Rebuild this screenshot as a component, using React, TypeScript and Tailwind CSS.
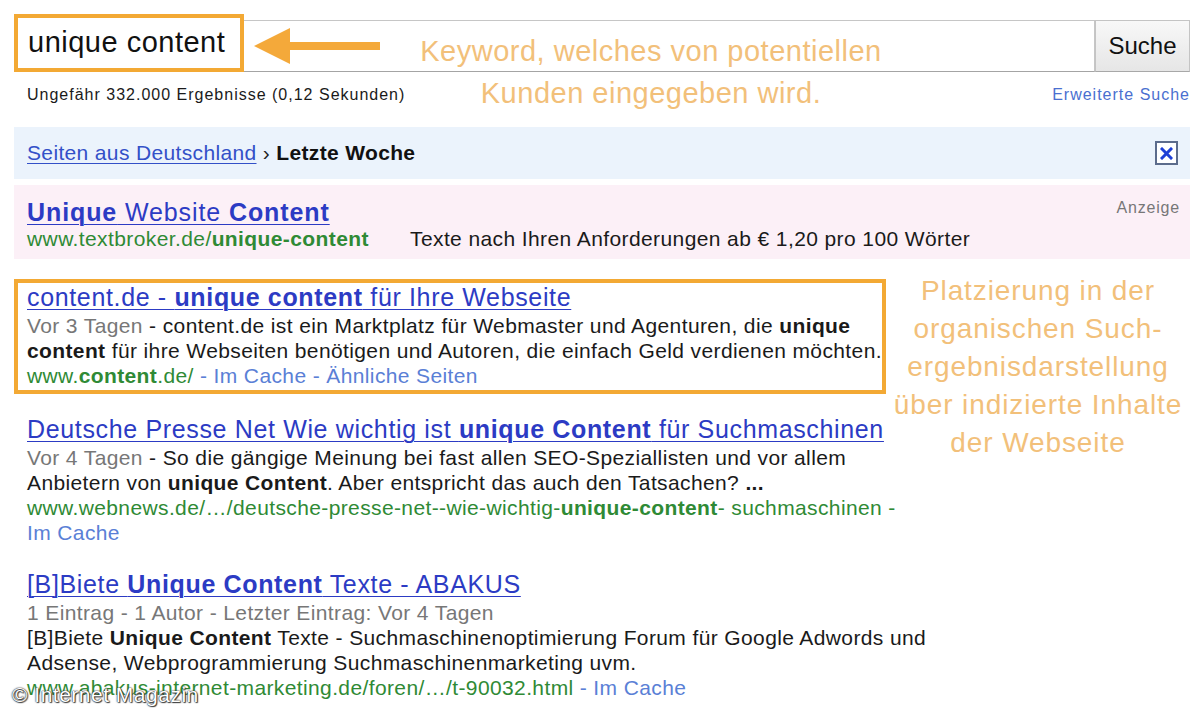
import React from "react";

const blue = "text-[#2c3bc4]";

function Result({
  title,
  lines,
  className = "",
}: {
  title: React.ReactNode;
  lines: React.ReactNode[];
  className?: string;
}) {
  return (
    <div className={className}>
      <a className={`block whitespace-nowrap text-[25px] leading-[26px] tracking-[0.65px] underline decoration-1 underline-offset-[3px] ${blue}`}>{title}</a>
      <div className="mt-[3px] text-[21px] leading-[25px] tracking-[0.38px] text-[#1a1a1a]">
        {lines.map((l, i) => (
          <div key={i} className="whitespace-nowrap">
            {l}
          </div>
        ))}
      </div>
    </div>
  );
}

export default function App() {
  return (
    <div className="relative w-[1200px] h-[720px] overflow-hidden bg-white font-['Liberation_Sans',Arial,sans-serif] pl-[14px] pr-[10px]">
      {/* search row */}
      <div className="relative mt-[20px] flex h-[52px]">
        <div className="flex-1 border border-[#c6c6c6] border-b-[#a4a4a4] bg-white" />
        <button className="w-[95px] border border-[#c4c4c4] border-b-[#a8a8a8] bg-gradient-to-b from-[#f8f8f8] to-[#e6e6e6] text-[24px] text-[#111]">
          Suche
        </button>

        <div className="absolute left-0 top-[-6px] flex h-[58px] w-[230px] items-center border-4 border-[#f3a934] bg-white pl-[10px] text-[29px] tracking-[0.5px] text-[#111]">
          unique content
        </div>

        <svg className="absolute left-[240px] top-[8px]" width="126" height="36" viewBox="0 0 126 36">
          <polygon points="0,18 36,0 36,36" fill="#f4a93a" />
          <rect x="34" y="14" width="92" height="8" fill="#f4a93a" />
        </svg>

        <div className="absolute left-[392px] top-[10px] w-[490px] text-center text-[29px] leading-[42px] tracking-[0.5px] text-[#f2c07a]">
          <div>Keyword, welches von potentiellen</div>
          <div>Kunden eingegeben wird.</div>
        </div>
      </div>

      {/* stats */}
      <div className="mt-[12px] flex items-center justify-between pl-[13px] text-[16px] leading-[22px] tracking-[1px]">
        <span className="text-[#1a1a1a]">Ungefähr 332.000 Ergebnisse (0,12 Sekunden)</span>
        <a className="text-[#4a6fd0]">Erweiterte Suche</a>
      </div>

      {/* filter bar */}
      <div className="mt-[21px] flex h-[52px] items-center justify-between bg-[#ebf3fc] pl-[13px] pr-[12px] text-[21px] tracking-[0.35px]">
        <div>
          <a className="text-[#3350c8] underline decoration-1 underline-offset-[3px]">Seiten aus Deutschland</a>
          <span className="text-[#222]"> › </span>
          <b className="text-[#111]">Letzte Woche</b>
        </div>
        <div className="flex h-[24px] w-[23px] items-center justify-center border-2 border-[#5c6c8c] bg-white">
          <svg width="13" height="13" viewBox="0 0 13 13">
            <path d="M2 2 L11 11 M11 2 L2 11" stroke="#1d3fd6" strokeWidth="3" strokeLinecap="square" />
          </svg>
        </div>
      </div>

      {/* ad */}
      <div className="mt-[6px] h-[74px] bg-[#fcf0f7] pl-[13px] pr-[10px] pt-[14px]">
        <div className="flex items-start justify-between">
          <a className={`text-[25px] leading-[26px] tracking-[0.9px] underline decoration-1 underline-offset-[3px] ${blue}`}>
            <b>Unique</b> Website <b>Content</b>
          </a>
          <span className="mt-[-3px] text-[16px] tracking-[0.8px] text-[#777]">Anzeige</span>
        </div>
        <div className="mt-[2px] flex text-[21px] leading-[24px] tracking-[0.4px]">
          <span className="w-[383px] text-[#2f8a35]">
            www.textbroker.de/<b>unique-content</b>
          </span>
          <span className="text-[#1a1a1a]">Texte nach Ihren Anforderungen ab € 1,20 pro 100 Wörter</span>
        </div>
      </div>

      {/* results + annotation */}
      <div className="mt-[20px] flex">
        <div className="w-[872px] shrink-0">
          <div className="border-4 border-[#f3a934] px-[9px] pb-[2px] pt-[1px]">
            <Result
              title={
                <>
                  content.de - <b>unique content</b> für Ihre Webseite
                </>
              }
              lines={[
                <>
                  <span className="text-[#777]">Vor 3 Tagen</span> - content.de ist ein Marktplatz für Webmaster und Agenturen, die <b>unique</b>
                </>,
                <>
                  <b>content</b> für ihre Webseiten benötigen und Autoren, die einfach Geld verdienen möchten.
                </>,
                <>
                  <span className="text-[#2f8a35]">
                    www.<b>content</b>.de/
                  </span>{" "}
                  <span className="text-[#5a80d6]">- Im Cache - Ähnliche Seiten</span>
                </>,
              ]}
            />
          </div>

          <Result
            className="mt-[22px] pl-[13px]"
            title={
              <>
                Deutsche Presse Net Wie wichtig ist <b>unique Content</b> für Suchmaschinen
              </>
            }
            lines={[
              <>
                <span className="text-[#777]">Vor 4 Tagen</span> - So die gängige Meinung bei fast allen SEO-Speziallisten und vor allem
              </>,
              <>
                Anbietern von <b>unique Content</b>. Aber entspricht das auch den Tatsachen? <b>...</b>
              </>,
              <span className="text-[#2f8a35]">
                www.webnews.de/…/deutsche-presse-net--wie-wichtig-<b>unique-content</b>- suchmaschinen -
              </span>,
              <span className="text-[#5a80d6]">Im Cache</span>,
            ]}
          />

          <Result
            className="mt-[26px] pl-[13px]"
            title={
              <>
                [B]Biete <b>Unique Content</b> Texte - ABAKUS
              </>
            }
            lines={[
              <span className="text-[#777]">1 Eintrag - 1 Autor - Letzter Eintrag: Vor 4 Tagen</span>,
              <>
                [B]Biete <b>Unique Content</b> Texte - Suchmaschinenoptimierung Forum für Google Adwords und
              </>,
              <>Adsense, Webprogrammierung Suchmaschinenmarketing uvm.</>,
              <>
                <span className="text-[#2f8a35]">www.abakus-internet-marketing.de/foren/…/t-90032.html</span>{" "}
                <span className="text-[#5a80d6]">- Im Cache</span>
              </>,
            ]}
          />
        </div>

        <div className="mt-[-7px] flex-1 whitespace-nowrap text-center text-[28px] leading-[38px] tracking-[0.9px] text-[#f2c07a]">
          <div>Platzierung in der</div>
          <div>organischen Such-</div>
          <div>ergebnisdarstellung</div>
          <div>über indizierte Inhalte</div>
          <div>der Webseite</div>
        </div>
      </div>

      <div className="absolute bottom-[10px] left-[12px] text-[21px] tracking-[0.5px] text-white [text-shadow:0_0_2px_#333,0_0_1px_#000,1px_1px_1px_#444]">
        © Internet Magazin
      </div>
    </div>
  );
}
